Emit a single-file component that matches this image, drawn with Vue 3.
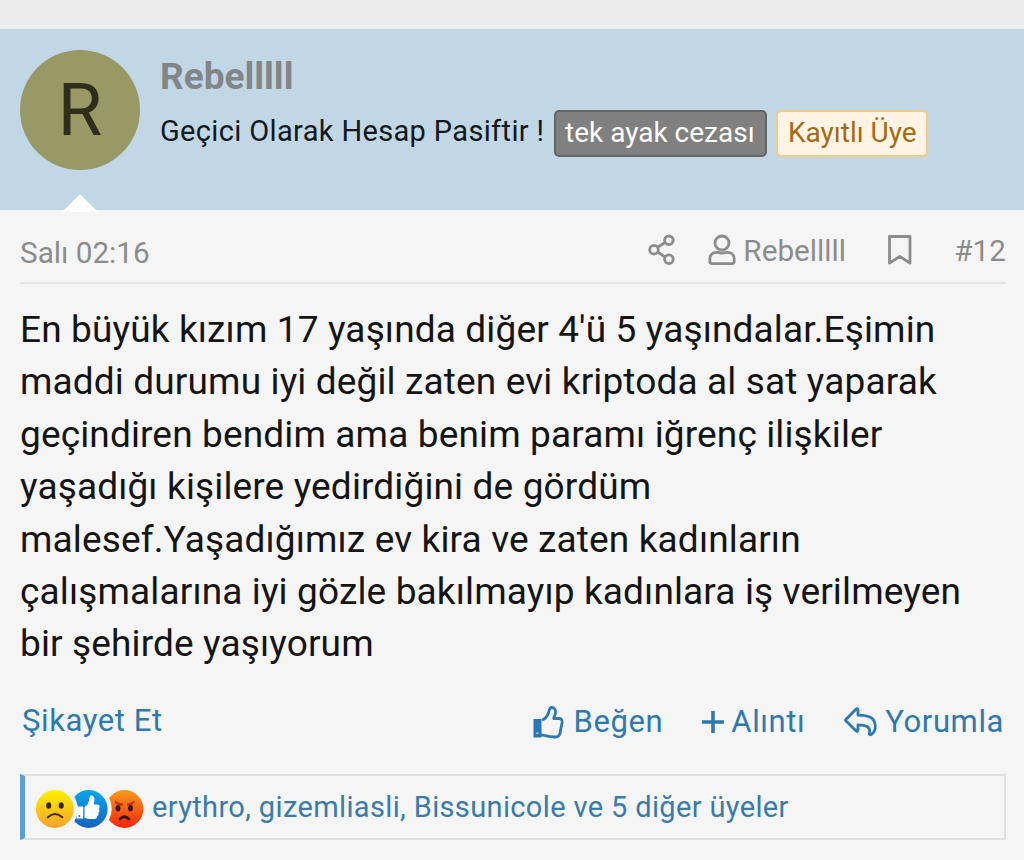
<script setup>
    import {ref} from 'vue'

    const post = ref({
        author: 'Rebelllll',
        title: 'Geçici Olarak Hesap Pasiftir !',
        date: 'Salı 02:16',
        number: '#12',
        lines: [
            'En büyük kızım 17 yaşında diğer 4\'ü 5 yaşındalar.Eşimin',
            'maddi durumu iyi değil zaten evi kriptoda al sat yaparak',
            'geçindiren bendim ama benim paramı iğrenç ilişkiler',
            'yaşadığı kişilere yedirdiğini de gördüm',
            'malesef.Yaşadığımız ev kira ve zaten kadınların',
            'çalışmalarına iyi gözle bakılmayıp kadınlara iş verilmeyen',
            'bir şehirde yaşıyorum',
        ],
        reactions: 'erythro, gizemliasli, Bissunicole ve 5 diğer üyeler',
    })
</script>

<template>
    <div class="page">
        <header class="user">
            <div class="avatar"><span>{{ post.author[0] }}</span></div>
            <div class="user-info">
                <h4 class="name">{{ post.author }}</h4>
                <div class="user-line">
                    <span class="user-title">{{ post.title }}</span>
                    <span class="banner gray"><span>tek ayak cezası</span></span>
                    <span class="banner orange"><span>Kayıtlı Üye</span></span>
                </div>
            </div>
            <i class="arrow"></i>
        </header>

        <article class="message">
            <div class="attribution">
                <span class="date">{{ post.date }}</span>
                <svg class="share" width="28" height="32" viewBox="0 0 28 32">
                    <path d="M9.500 13.300 17.200 8.500M9.500 18l7.700 5"/>
                    <circle cx="6" cy="15.700" r="4.300"/>
                    <circle cx="20.900" cy="6.300" r="4.300"/>
                    <circle cx="20.900" cy="25.200" r="4.300"/>
                </svg>
                <svg class="person" width="28" height="32" viewBox="0 0 28 32">
                    <circle cx="14" cy="9" r="7"/>
                    <path d="M8.500 18.300C4.500 18.300 1.800 21 1.800 25v2.300c0 1.500.9 2.400 2.400 2.400h19.600c1.500 0 2.400-.9 2.400-2.400V25c0-4-2.700-6.700-6.700-6.700-2 0-3 .9-5.500.9s-3.500-.9-5.500-.9z"/>
                </svg>
                <span class="owner">{{ post.author }}</span>
                <svg class="bookmark" width="26" height="32" viewBox="0 0 26 32">
                    <path d="M2.500 2.500h20.500v26.500L12.800 22.500 2.500 29z"/>
                </svg>
                <span class="number">{{ post.number }}</span>
            </div>

            <div class="content">
                <p v-for="(line, index) in post.lines" :key="index" class="line">{{ line }}</p>
            </div>

            <div class="actions">
                <a class="report">Şikayet Et</a>
                <a class="like">
                    <svg width="32" height="34" viewBox="0 0 32 34">
                        <path class="fill" d="M.5 14h8v18.500h-8z"/>
                        <circle class="dot" cx="4.200" cy="28.800" r="1.400"/>
                        <path d="M9 15c3.500-1 5.500-4 6.600-7.500.7-2.800.9-5 3-5 3 0 4.200 2.300 3.900 5.200-.2 2.400-1.500 4-1.800 5.800h5.500c2.300 0 3.300 1.800 2.900 4l-2 10.500c-.5 2.600-2 4-4.600 4-5.500.2-8-.8-13.500-2H1.900"/>
                    </svg>
                    <span>Beğen</span>
                </a>
                <a class="quote">
                    <svg width="22" height="22" viewBox="0 0 22 22">
                        <path d="M11 0v22M0 11h22"/>
                    </svg>
                    <span>Alıntı</span>
                </a>
                <a class="reply">
                    <svg width="34" height="30" viewBox="0 0 34 30">
                        <path d="M1.800 12.400 12 2.200c1-.9 2-.4 2 .9v5c10 .1 17.300 2 17.300 11.500 0 3.500-1.200 6-3.900 7.800-1.200.8-2.400.2-2-1.300 1.600-6.300-3.400-8-11.400-8.200v5c0 1.300-1 1.800-2 .9L1.800 13.700q-.7-.6 0-1.300z"/>
                    </svg>
                    <span>Yorumla</span>
                </a>
            </div>

            <div class="reactions">
                <svg width="108" height="40" viewBox="0 0 108 40">
                    <defs>
                        <linearGradient id="yellow" x1="0" y1="0" x2="0" y2="1">
                            <stop offset="0" stop-color="#fff000"/>
                            <stop offset="1" stop-color="#f9a22d"/>
                        </linearGradient>
                        <linearGradient id="blue" x1="0" y1="0" x2="0" y2="1">
                            <stop offset="0" stop-color="#08a7ee"/>
                            <stop offset="1" stop-color="#1762bd"/>
                        </linearGradient>
                        <linearGradient id="red" x1="0" y1="0" x2="0" y2="1">
                            <stop offset="0" stop-color="#f79a1c"/>
                            <stop offset="1" stop-color="#f8250c"/>
                        </linearGradient>
                    </defs>

                    <!-- angry -->
                    <circle cx="88.500" cy="20" r="18.900" fill="url(#red)"/>
                    <path d="M79 12.500q3 3 8 3.300M98.500 12.500q-3 3-7.500 3.300" fill="none" stroke="#b0300c" stroke-width="1.900"/>
                    <ellipse cx="82" cy="19.300" rx="2.400" ry="3.200" fill="#3c1008"/>
                    <ellipse cx="94.500" cy="19.300" rx="2.400" ry="3.200" fill="#3c1008"/>
                    <path d="M84 30q4.500-4.500 9 0" fill="none" stroke="#3c1008" stroke-width="2.600" stroke-linecap="round"/>

                    <!-- like -->
                    <circle cx="52.700" cy="20" r="23" fill="#f5f5f5"/>
                    <circle cx="52.700" cy="20" r="18.900" fill="url(#blue)"/>
                    <path d="M48.500 18c3-1.500 4.500-5 5-9.500.3-3 5-2.500 5 2 0 2-.8 3.500-.8 5h3.500c3 0 3 3.500 1.300 4.300 1.500 1 1.200 3.400-.2 4 .7 1.400 0 3-1.300 3.500.2 1.700-1 2.700-2.500 2.700h-5.500c-2.500 0-3-1-4.500-1.500z" fill="#fff"/>

                    <!-- sad -->
                    <circle cx="18.800" cy="20" r="23" fill="#f5f5f5"/>
                    <path d="M40.500 17.500h6.700v12h-6.700z" fill="#fff"/>
                    <circle cx="43.300" cy="27" r="1" fill="#1a80d0"/>
                    <circle cx="18.800" cy="20" r="18.900" fill="url(#yellow)"/>
                    <ellipse cx="12.700" cy="16.500" rx="2.500" ry="3.300" fill="#33240a"/>
                    <ellipse cx="25.200" cy="16.500" rx="2.500" ry="3.300" fill="#33240a"/>
                    <path d="M11.800 28.300q7.200-6.500 14.500 0" fill="none" stroke="#3d2407" stroke-width="1.900" stroke-linecap="round"/>
                </svg>
                <a class="names">{{ post.reactions }}</a>
            </div>
        </article>
    </div>
</template>

<style>
    body {
        background: #f5f5f5;
    }
</style>

<style scoped>
    .page {
        box-sizing: border-box;
        width: 1024px;
        height: 860px;
        overflow: hidden;
        border-top: 29px solid #ececec;
        background: #f5f5f5;
        font-family: Roboto, "Liberation Sans", sans-serif;
        font-size: 30px;
        white-space: nowrap;
    }

    .user {
        position: relative;
        box-sizing: border-box;
        height: 181px;
        display: flex;
        padding: 21px 20px 0;
        gap: 20px;
        background: #c1d7e5;
    }

    .avatar {
        width: 120px;
        height: 120px;
        border-radius: 50%;
        background: #999966;
        color: #2e2e1a;
        font-size: 72px;
        line-height: 121px;
        text-align: center;
    }

    .name {
        margin: 5px 0 0;
        font-size: 37px;
        line-height: 44px;
        font-weight: 700;
        color: #838689;
    }

    .user-line {
        display: flex;
        align-items: center;
        margin-top: 11px;
        font-size: 28px;
    }

    .user-title {
        width: 394px;
        margin-top: -5px;
        font-size: 29px;
        letter-spacing: 0.35px;
        color: #101820;
    }

    .banner {
        box-sizing: border-box;
        height: 47px;
        padding: 0 10px;
        border: 2px solid #626669;
        border-radius: 5px;
        line-height: 41px;
    }

    .gray {
        width: 213px;
        padding-left: 9px;
        background: #808080;
        color: #fff;
    }

    .orange {
        width: 152px;
        margin-left: 9px;
        border-color: #f8c983;
        background: #fff4e5;
        color: #a66a10;
    }

    .arrow {
        position: absolute;
        left: 62px;
        bottom: -2px;
        border: 18px solid transparent;
        border-top: 0;
        border-bottom-color: #fff;
    }

    .message {
        padding: 0 18px 0 20px;
    }

    .attribution {
        box-sizing: border-box;
        height: 74px;
        display: flex;
        align-items: center;
        padding-top: 8px;
        border-bottom: 2px solid #e5e5e5;
        font-size: 29.7px;
        color: #8c8c8c;
    }

    .attribution svg {
        fill: none;
        stroke: #8c8c8c;
        stroke-width: 2.8;
        stroke-linejoin: round;
    }

    .date {
        margin-top: 4px;
    }

    .share {
        margin-left: auto;
    }

    .person {
        margin-left: 32px;
    }

    .owner {
        width: 103px;
        margin-left: 7px;
    }

    .bookmark {
        margin-left: 41px;
    }

    .number {
        margin-left: 41px;
    }

    .content {
        margin-top: 20px;
        font-size: 37px;
        line-height: 52.4px;
        letter-spacing: 0.14px;
        color: #141414;
    }

    .line {
        margin: 0;
    }

    .actions {
        display: flex;
        align-items: center;
        height: 40px;
        margin-top: 30px;
        padding: 0 2px;
        font-size: 31px;
        letter-spacing: 0.6px;
        color: #2d79b0;
    }

    .actions a {
        display: flex;
        align-items: center;
    }

    .actions .like,
    .actions .quote,
    .actions .reply {
        margin-top: 2px;
    }

    .actions svg {
        fill: none;
        stroke: #2d79b0;
        stroke-width: 2.8;
        stroke-linejoin: round;
    }

    .actions .fill {
        fill: #2876b4;
        stroke: none;
    }

    .actions .dot {
        fill: #f5f5f5;
        stroke: none;
    }

    .like {
        margin-left: auto;
        gap: 9px;
    }

    .quote {
        margin-left: 39px;
        gap: 7px;
    }

    .quote svg {
        stroke-width: 3.6;
    }

    .reply {
        margin-left: 39px;
        gap: 7px;
    }

    .reactions {
        box-sizing: border-box;
        height: 66px;
        display: flex;
        align-items: center;
        margin-top: 33px;
        padding-left: 11px;
        border: 2px solid #e0e0e0;
        border-left: 5px solid #5a9fd4;
        color: #3a7ba8;
        font-size: 29px;
        letter-spacing: 0.36px;
    }

    .reactions svg {
        margin-top: 4px;
    }

    .names {
        margin-left: 8px;
    }
</style>
